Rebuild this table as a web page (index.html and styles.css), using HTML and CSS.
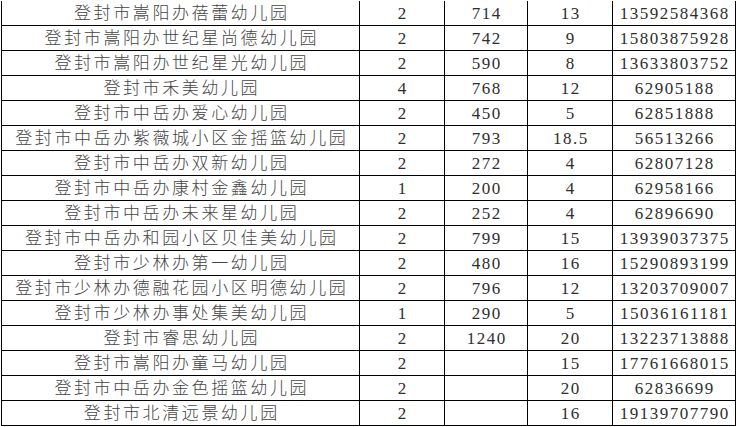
FILE: index.html
```html
<!DOCTYPE html>
<html lang="zh-CN">
<head>
<meta charset="utf-8">
<title>登封市幼儿园</title>
<link rel="stylesheet" href="styles.css">
</head>
<body>
<div class="sheet">
  <div class="row"><div class="c name">登封市嵩阳办蓓蕾幼儿园</div><div class="c">2</div><div class="c">714</div><div class="c">13</div><div class="c">13592584368</div></div>
  <div class="row"><div class="c name">登封市嵩阳办世纪星尚德幼儿园</div><div class="c">2</div><div class="c">742</div><div class="c">9</div><div class="c">15803875928</div></div>
  <div class="row"><div class="c name">登封市嵩阳办世纪星光幼儿园</div><div class="c">2</div><div class="c">590</div><div class="c">8</div><div class="c">13633803752</div></div>
  <div class="row"><div class="c name">登封市禾美幼儿园</div><div class="c">4</div><div class="c">768</div><div class="c">12</div><div class="c">62905188</div></div>
  <div class="row"><div class="c name">登封市中岳办爱心幼儿园</div><div class="c">2</div><div class="c">450</div><div class="c">5</div><div class="c">62851888</div></div>
  <div class="row"><div class="c name">登封市中岳办紫薇城小区金摇篮幼儿园</div><div class="c">2</div><div class="c">793</div><div class="c">18.5</div><div class="c">56513266</div></div>
  <div class="row"><div class="c name">登封市中岳办双新幼儿园</div><div class="c">2</div><div class="c">272</div><div class="c">4</div><div class="c">62807128</div></div>
  <div class="row"><div class="c name">登封市中岳办康村金鑫幼儿园</div><div class="c">1</div><div class="c">200</div><div class="c">4</div><div class="c">62958166</div></div>
  <div class="row"><div class="c name">登封市中岳办未来星幼儿园</div><div class="c">2</div><div class="c">252</div><div class="c">4</div><div class="c">62896690</div></div>
  <div class="row"><div class="c name">登封市中岳办和园小区贝佳美幼儿园</div><div class="c">2</div><div class="c">799</div><div class="c">15</div><div class="c">13939037375</div></div>
  <div class="row"><div class="c name">登封市少林办第一幼儿园</div><div class="c">2</div><div class="c">480</div><div class="c">16</div><div class="c">15290893199</div></div>
  <div class="row"><div class="c name">登封市少林办德融花园小区明德幼儿园</div><div class="c">2</div><div class="c">796</div><div class="c">12</div><div class="c">13203709007</div></div>
  <div class="row"><div class="c name">登封市少林办事处集美幼儿园</div><div class="c">1</div><div class="c">290</div><div class="c">5</div><div class="c">15036161181</div></div>
  <div class="row"><div class="c name">登封市睿思幼儿园</div><div class="c">2</div><div class="c">1240</div><div class="c">20</div><div class="c">13223713888</div></div>
  <div class="row"><div class="c name">登封市嵩阳办童马幼儿园</div><div class="c">2</div><div class="c"></div><div class="c">15</div><div class="c">17761668015</div></div>
  <div class="row"><div class="c name">登封市中岳办金色摇篮幼儿园</div><div class="c">2</div><div class="c"></div><div class="c">20</div><div class="c">62836699</div></div>
  <div class="row"><div class="c name">登封市北清远景幼儿园</div><div class="c">2</div><div class="c"></div><div class="c">16</div><div class="c">19139707790</div></div>
</div>
</body>
</html>
```
FILE: styles.css
```css
html, body {
  margin: 0;
  padding: 0;
  background: #fff;
}
body {
  padding: 1px 0 0 1px;
}
.sheet {
  display: grid;
  grid-template-columns: 358px 85px 83px 85px 123px;
  grid-auto-rows: 25px;
  border-left: 1px solid #000;
  width: max-content;
  font-family: "Liberation Serif", "Noto Sans CJK SC", serif;
  color: #2e2e2e;
}
.row {
  display: contents;
}
.c {
  border-right: 1px solid #000;
  border-bottom: 1px solid #000;
  display: flex;
  align-items: center;
  justify-content: center;
  font-size: 17px;
  line-height: 24px;
  letter-spacing: 1.5px;
  padding-left: 1.5px;
  padding-top: 1px;
  white-space: nowrap;
  overflow: hidden;
}
.name {
  font-size: 17px;
  font-weight: 300;
  color: #444;
  letter-spacing: 2.6px;
  padding-left: 2.6px;
}
```
